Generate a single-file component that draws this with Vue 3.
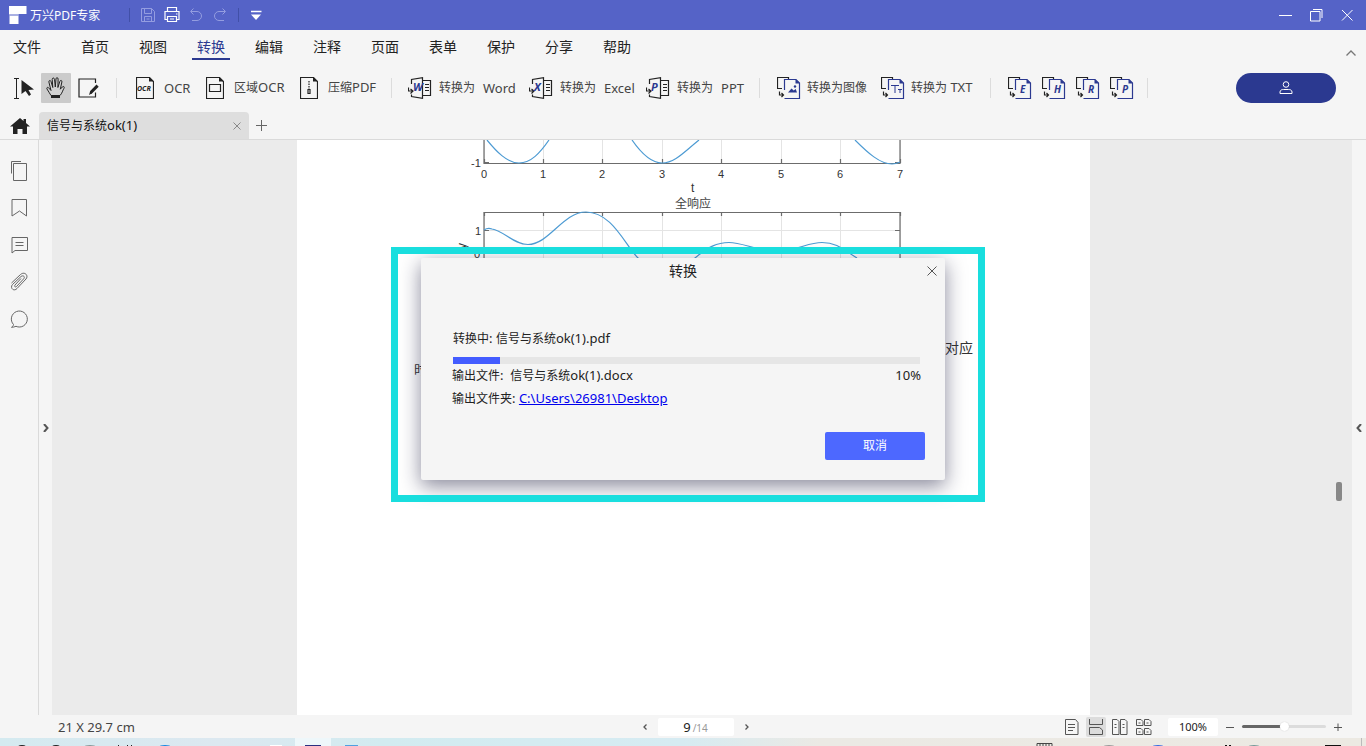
<script setup>
import { ref } from 'vue'

const menus = ['首页', '视图', '转换', '编辑', '注释', '页面', '表单', '保护', '分享', '帮助']
const activeMenu = ref('转换')
const officeTools = [
  { letter: 'W', name: 'Word' },
  { letter: 'X', name: 'Excel' },
  { letter: 'P', name: 'PPT' }
]
const moreFormats = ['E', 'H', 'R', 'P']
const ticks = [0, 1, 2, 3, 4, 5, 6, 7].map((n) => ({ n, x: 187 + Math.floor(n * 59.43) }))
const progress = ref(10)
const zoom = ref(51)
const dialogOpen = ref(true)
</script>

<template>
  <div class="app">
    <header class="titlebar">
      <svg class="logo" width="18" height="19" viewBox="0 0 18 19"><path d="M0 0h17.500v8H9.500v1.500H0zM.5 9.500h9V18h-9z" fill="#fff" /><path d="M0 9h9.500" stroke="#5563c7" /></svg>
      <span class="app-name">万兴PDF专家</span>
      <i class="tsep"></i>
      <button class="quick dim" aria-label="保存"><svg width="16" height="16" viewBox="0 0 16 16"><path d="M1.500 1.500h10l3 3v10h-13zM4.500 1.500v5h7v-5M4.500 14.500v-5h7v5M6.500 12h3" /></svg></button>
      <button class="quick" aria-label="打印"><svg width="16" height="16" viewBox="0 0 16 16"><path d="M3.500 4.500v-4h9v4M3.500 12.500h-2.500v-8h14v8h-2.500M3.500 9.500h9v5h-9zM6 12h4M12 7h1.500" stroke-width="1.200" /></svg></button>
      <button class="quick dim" aria-label="撤销"><svg width="16" height="16" viewBox="0 0 16 16"><path d="M5.500 1.500L2.500 4.500l3 3M3 4.500h6a4.500 4.500 0 0 1 0 9H4" /></svg></button>
      <button class="quick dim" aria-label="重做"><svg width="16" height="16" viewBox="0 0 16 16"><path d="M10.500 1.500l3 3-3 3M13 4.500H7a4.500 4.500 0 0 0 0 9h5" /></svg></button>
      <i class="tsep second"></i>
      <button class="quick more" aria-label="更多"><svg width="12" height="12" viewBox="0 0 12 12"><path d="M1 2.500h10.500" stroke-width="1.500" /><path d="M1 5.500h10L6 11z" fill="#fff" stroke="none" /></svg></button>
      <div class="window-controls">
        <button aria-label="最小化"><svg width="13" height="13" viewBox="0 0 13 13"><path d="M0 6.500h13" /></svg></button>
        <button aria-label="还原"><svg width="13" height="13" viewBox="0 0 13 13"><path d="M.5 2.500h9.500v9.500H.5zM3 .5h9V9" /></svg></button>
        <button aria-label="关闭"><svg width="13" height="13" viewBox="0 0 13 13"><path d="M1 1l10.500 10.500M11.500 1L1 11.500" /></svg></button>
      </div>
    </header>

    <nav class="menubar">
      <button class="menu file">文件</button>
      <button v-for="m in menus" :key="m" class="menu" :class="{ active: m === activeMenu }" @click="activeMenu = m">{{ m }}</button>
      <button class="collapse" aria-label="收起"><svg width="10" height="6" viewBox="0 0 10 6"><path d="M.5 5.500L5 1l4.500 4.500" fill="none" stroke="#777" stroke-width="1.300" /></svg></button>
    </nav>

    <div class="toolbar">
      <div class="modes">
        <button aria-label="选择"><svg width="20" height="24" viewBox="0 0 20 24"><path d="M0 2.500h5M0 22.500h5M2.500 2.500v20" stroke="#222" fill="none" /><path d="M7.500 4v14l4-3 3.500 5 2-1.500-2.500-4.500 5.500-.5z" fill="#222" /></svg></button>
        <button class="on" aria-label="手形"><svg width="22" height="24" viewBox="0 0 22 24"><path d="M6 19.500c-1-2.500-3-4-4-6.500-.8-1.400.9-2.300 1.800-1l2.200 2.500L3.900 6C3.600 4.200 5.600 4 6 5.500l1.800 6-.6-8c0-2 2-2 2.300-.2l.8 7.700.7-8.200c.2-1.700 2.200-1.500 2.100.3l-.2 8.400 2-6.200c.6-1.600 2.300-1 2 .6l-1.600 7.300 2-2.200c1.200-1.200 2.500-.2 1.700 1.200-1.200 2-2 5.300-4 7.300z" fill="#d2d2d2" stroke="#222" /><path d="M6 19.500h9v2.500H6z" fill="#222" /></svg></button>
        <button aria-label="编辑"><svg width="21" height="20" viewBox="0 0 21 20"><path d="M17.500 5V1H1v18h16.500v-4.500" stroke="#222" stroke-width="1.200" fill="none" /><path d="M11 17l1.200-4L18.500 6.500l2.200 2.200-6.500 6.500z" fill="#222" /></svg></button>
      </div>
      <i class="sep"></i>
      <div class="group ocr-group">
        <button class="tool"><svg width="18" height="22" viewBox="0 0 18 22"><path d="M.5.500h13l4 4v17H.5z" class="ink" /><path d="M13 0v4.500h5z" fill="#222" /><text x="1" y="14" class="ocr-mark">OCR</text></svg><span>OCR</span></button>
        <button class="tool"><svg width="18" height="22" viewBox="0 0 18 22"><path d="M.5.500h13l4 4v17H.5z" class="ink" /><path d="M13 0v4.500h5z" fill="#222" /><path d="M3.500 7.500h11v7h-11z" class="ink" /></svg><span><span class="cn">区域</span>OCR</span></button>
        <button class="tool"><svg width="18" height="22" viewBox="0 0 18 22"><path d="M.5.500h13l4 4v17H.5z" class="ink" /><path d="M13 0v4.500h5z" fill="#222" /><path d="M9 4v8" class="ink" stroke-dasharray="1.500 1" /><path d="M8 12.500h2v4H8z" class="ink" /></svg><span><span class="cn">压缩</span>PDF</span></button>
      </div>
      <i class="sep"></i>
      <div class="group office-group">
        <button v-for="t in officeTools" :key="t.name" class="tool office">
          <svg width="24" height="22" viewBox="0 0 24 22">
            <path d="M3.500 7V2.500L14.500.700v20.600L3.500 19.500v-2M14.500 3.500h8v15h-8M17 7.500h4M17 10.500h4M17 13.500h4M.500 10.500v3.500h4M2.500 12l2.500 2-2.500 2.500" class="ink" />
            <text x="5" y="14" class="letter">{{ t.letter }}</text>
          </svg>
          <span class="cn">转换为</span><span class="kind">{{ t.name }}</span>
        </button>
      </div>
      <i class="sep"></i>
      <div class="group media-group">
        <button class="tool media">
          <svg width="24" height="22" viewBox="0 0 24 22"><path d="M5 11.500H.500V.500h11v2M2.500 14.500v3.500h4M4.500 16l2 2L4.500 20" class="ink" /><path d="M7.500 13V2.500H19l3.500 3.500v15.500h-15" class="blue" /><path d="M18.500 2v4.500H23z" fill="#2b3990" /><path d="M11 15.500l3.500-4 2.200 2 2-1.500 1.300 3.500z" fill="#2b3990" /><circle cx="18" cy="9.500" r="1.200" fill="#2b3990" /></svg>
          <span class="cn">转换为图像</span>
        </button>
        <button class="tool media">
          <svg width="24" height="22" viewBox="0 0 24 22"><path d="M5 11.500H.500V.500h11v2M2.500 14.500v3.500h4M4.500 16l2 2L4.500 20" class="ink" /><path d="M7.500 13V2.500H19l3.500 3.500v15.500h-15" class="blue" /><path d="M10 8.500h8M14 8.500v7.500M17 12.500h4M19 12.500v3.500" fill="none" stroke="#2b3990" /><path d="M18.500 2v4.500H23z" fill="#2b3990" /></svg>
          <span><span class="cn">转换为</span> TXT</span>
        </button>
      </div>
      <i class="sep"></i>
      <div class="group more-group">
        <button v-for="f in moreFormats" :key="f" class="tool" :aria-label="f">
          <svg width="24" height="22" viewBox="0 0 24 22"><path d="M5 11.500H.500V.500h11v2M2.500 14.500v3.500h4M4.500 16l2 2L4.500 20" class="ink" /><path d="M7.500 13V2.500H19l3.500 3.500v15.500h-15" class="blue" /><path d="M18.500 2v4.500H23z" fill="#2b3990" /><text x="12" y="16" class="letter small">{{ f }}</text></svg>
        </button>
      </div>
      <i class="sep"></i>
      <button class="account" aria-label="账户"><svg width="14" height="14" viewBox="0 0 14 14"><circle cx="7" cy="3.500" r="2.800" /><path d="M1 12.500V11c0-2 2-2.500 3.500-2.500h5c1.500 0 3.500.5 3.500 2.500v1.500z" /></svg></button>
    </div>

    <div class="tabs">
      <button class="home" aria-label="主页"><svg width="20" height="16" viewBox="0 0 20 16"><path d="M10 0l3.500 3V1H16v4l4 3.500h-3V16h-4.500v-5h-5v5H3V8.500H0z" fill="#222" /></svg></button>
      <div class="tab"><span><span class="cn">信号与系统</span>ok(1)</span><button aria-label="关闭标签"><svg width="8" height="8" viewBox="0 0 8 8"><path d="M.5.500l7 7M7.500.500l-7 7" stroke="#888" /></svg></button></div>
      <button class="add" aria-label="新标签"><svg width="11" height="11" viewBox="0 0 11 11"><path d="M5.500 0v11M0 5.500h11" stroke="#666" /></svg></button>
    </div>

    <main class="workspace">
      <aside class="sidebar">
        <button aria-label="页面"><svg width="18" height="20" viewBox="0 0 18 20"><path d="M3.500 2.500h13v17h-13zM1.500 12.500V.500h9.500" /></svg></button>
        <button aria-label="书签"><svg width="18" height="20" viewBox="0 0 18 20"><path d="M2 1.500h14.500v16.500L9.500 13 2 18z" /></svg></button>
        <button aria-label="注释"><svg width="18" height="20" viewBox="0 0 18 20"><path d="M2 2.500h15.500v13H5l-3 2.500zM5.500 7.500h8M5.500 10.500h8" /></svg></button>
        <button aria-label="附件"><svg width="18" height="20" viewBox="0 0 18 20"><path d="M1.500 11L10.500 2.500c4-3.500 8.500 1 5.500 4.500l-9 9.500c-3 3.500-7.500-.5-4.500-4l8.500-8c2.500-1.800 4.500.5 2.500 2.500l-7 7.500c-1.200 1.200-2.500-.2-1.500-1.500l6-6.500" /></svg></button>
        <button aria-label="讨论"><svg width="18" height="20" viewBox="0 0 18 20"><path d="M3.500 15.500a8 8 0 1 1 2.500 1.800c-1.500.8-3 .8-4.500 1 1-.8 2-1.500 2-2.800" /></svg></button>
      </aside>
      <button class="expander" aria-label="展开左侧"><svg width="6" height="8" viewBox="0 0 6 8"><path d="M1 0l3.500 4L1 8" /></svg></button>
      <div class="canvas">
        <article class="page">
          <svg class="figure" width="793" height="260" viewBox="0 0 793 260">
            <g stroke="#e4e4e4"><path v-for="t in ticks" :key="t.n" :d="`M${t.x + .5} 0v23M${t.x + .5} 72v60`" /><path d="M187 90.500h416" /></g>
            <g class="axis">
              <path d="M187 0v23.500h416V0M187 130V72.500h416V130" />
              <path d="M187 22.500h5M603 22.500h-5M187 90.500h5M603 90.500h-5" />
              <path v-for="t in ticks" :key="t.n" :d="`M${t.x + .5} 23v-4M${t.x + .5} 72v4`" />
            </g>
            <g class="curve">
              <path d="M190 0C199 11 210 23 222 23C234 23 243 13 252 0M335 0C344 13 355 23 365 23C378 23 388 11 402 0M558 0C571 13 583 24 595 24Q599 24 603 22" />
              <path d="M187 90C190 88 192 88 195 89C207 91 217 104.500 231 104.500C252 104.500 266 72 289 72C315 72 328 105 341 118C360 137 382 137 398 118C411 107 420 102.500 432 102.500C446 102.500 460 111 479 111C500 111 510 102.500 525 102.500C540 102.500 547 110 560 118" />
            </g>
            <g class="labels">
              <text x="174" y="27">-1</text>
              <text v-for="t in ticks" :key="t.n" :x="t.x - 3" y="38">{{ t.n }}</text>
              <text x="394" y="52" class="axis-name">t</text><text x="378" y="68" class="chart-title">全响应</text>
              <text x="178" y="95">1</text><text x="177" y="118">0</text>
              <text x="0" y="0" class="axis-name" transform="translate(169 109) rotate(-90)">y</text>
            </g>
            <text x="648" y="213" class="body-text">对应</text>
            <text x="117" y="234" class="body-text small">时</text>
          </svg>
        </article>
      </div>
      <div class="scrollbar"><i></i></div>
      <button class="expander right" aria-label="展开右侧"><svg width="6" height="8" viewBox="0 0 6 8"><path d="M5 0L1.500 4 5 8" /></svg></button>
    </main>

    <footer class="status">
      <span class="size">21 X 29.7 cm</span>
      <div class="pager">
        <button aria-label="上一页"><svg width="4" height="6" viewBox="0 0 4 6"><path d="M3.500.500L1 3l2.500 2.500" /></svg></button>
        <div class="page-no"><b>9</b><span>/14</span></div>
        <button aria-label="下一页"><svg width="4" height="6" viewBox="0 0 4 6"><path d="M.500.500L3 3 .500 5.500" /></svg></button>
      </div>
      <div class="views">
        <button aria-label="单页"><svg width="16" height="16" viewBox="0 0 16 16"><path d="M1.500.500h10l2.500 3v12H1.500zM4 5.500h7M4 8.500h7M4 11.500h5" /></svg></button>
        <button class="on" aria-label="连续"><svg width="16" height="16" viewBox="0 0 16 16"><path d="M1.500 0v5.500h13V0M1.500 15.500v-7h10l3 2.500v4.500z" /></svg></button>
        <button aria-label="双页"><svg width="16" height="16" viewBox="0 0 16 16"><path d="M.500.500h4.500l2 2v13H.5zM8.500.500H13l2 2v13H8.500zM2.500 5.500h2M2.500 8.500h2M10.500 5.500h2M10.500 8.500h2" /></svg></button>
        <button aria-label="双页连续"><svg width="16" height="16" viewBox="0 0 16 16"><path d="M.500.500H5l2 2v4H.5zM8.500.500H13l2 2v4H8.500zM.500 9.500H5l2 2v4H.5zM8.500 9.500H13l2 2v4H8.500zM2.500 4h2M10.500 4h2M2.500 13h2M10.500 13h2" /></svg></button>
        <input class="zoom-value" value="100%" aria-label="缩放比例" />
        <button class="step" aria-label="缩小"><svg width="8" height="8" viewBox="0 0 8 8"><path d="M0 4.500h8" /></svg></button>
        <input v-model="zoom" class="slider" type="range" min="0" max="100" aria-label="缩放" :style="{ '--fill': zoom + '%' }" />
        <button class="step" aria-label="放大"><svg width="8" height="8" viewBox="0 0 8 8"><path d="M0 4.500h8M4 .500v8" /></svg></button>
      </div>
    </footer>
    <svg class="taskbar" height="8" width="100%">
      <rect x="295" width="36" height="8" fill="#eef7fa" />
      <rect x="305" y="7" width="16" height="1" fill="#2b3080" /><rect x="345" y="7" width="13" height="1" fill="#4fa0e0" /><rect x="270" y="7" width="12" height="1" fill="#fff" />
      <g fill="#222"><ellipse cx="22" cy="9" rx="4" ry="2" /><ellipse cx="56" cy="9" rx="4" ry="2" /><path d="M118 7h1v1h-1zM127 7h1v1h-1zM131 7h1v1h-1z" /></g>
      <ellipse cx="90" cy="9" rx="6" ry="2" fill="#899" /><ellipse cx="165" cy="9" rx="6" ry="2" fill="#1687e0" />
      <path d="M1037 8V5.500h15V8M1040 6v2M1043 6v2M1046 6v2M1049 6v2" fill="none" stroke="#444" />
      <ellipse cx="1109" cy="9" rx="6" ry="2" fill="#999" /><ellipse cx="1158" cy="9" rx="6" ry="2" fill="#356be0" /><ellipse cx="1254" cy="9" rx="6" ry="2" fill="#799" />
      <path d="M1225 7h2v1h-2zM1229 7h2v1h-2zM1325 7h16v1h-16z" fill="#111" /><path d="M1361.500 0v8" stroke="#bbb" />
    </svg>

    <section v-if="dialogOpen" class="dialog" role="dialog" aria-labelledby="dialog-title">
      <header><h2 id="dialog-title">转换</h2><button class="close" aria-label="关闭对话框" @click="dialogOpen = false"><svg width="10" height="10" viewBox="0 0 10 10"><path d="M.5.500l9 9M9.500.500l-9 9" stroke="#555" /></svg></button></header>
      <div class="dialog-body">
        <label for="convert-progress"><span class="cn">转换中</span>: <span class="cn">信号与系统</span>ok(1).pdf</label>
        <progress id="convert-progress" :value="progress" max="100"></progress>
        <p><span><span class="cn">输出文件</span>:&nbsp; <span class="cn">信号与系统</span>ok(1).docx</span><span>{{ progress }}%</span></p>
        <p><span><span class="cn">输出文件夹</span>: <a href="#">C:\Users\26981\Desktop</a></span></p>
      </div>
      <button class="cancel">取消</button>
    </section>
    <div class="highlight"></div>
  </div>
</template>

<style>
html, body, #app { height: 100%; }
body { margin: 0; overflow: hidden; }
</style>

<style scoped>
* { box-sizing: border-box; }
.app { position: relative; display: flex; flex-direction: column; height: 100vh; background: #f5f5f5; color: #222; font: 13px/18px "Noto Sans", "Noto Sans CJK SC", sans-serif; white-space: nowrap; }
button { border: 0; padding: 0; background: none; font: inherit; color: inherit; display: flex; align-items: center; justify-content: center; flex: none; }
svg { display: block; flex: none; }
.cn { font-size: 12px; }

.titlebar { height: 30px; display: flex; align-items: center; background: #5563c7; color: #fff; padding: 0 3px 0 9px; flex: none; }
.app-name { font-size: 12px; line-height: 20px; padding-top: 1px; margin-left: 3px; width: 99px; }
.tsep { width: 1px; height: 14px; background: #4150a8; margin-right: 6px; }
.tsep.second { margin: 0 5px 0 6px; }
.quick { width: 24px; height: 24px; }
.quick svg, .window-controls svg { fill: none; stroke: #fff; }
.quick.dim svg { stroke: #949de0; }
.window-controls { margin-left: auto; display: flex; }
.window-controls button { width: 31px; height: 30px; }

.menubar { height: 35px; display: flex; align-items: flex-start; gap: 20px; padding: 4px 10px 0 8px; font-size: 14px; flex: none; }
.menu { width: 38px; height: 26px; padding-top: 2px; border-bottom: 2px solid transparent; }
.menu.file { margin-right: 10px; }
.menu.active { color: #2b3990; border-color: #2b3990; }
.collapse { margin: 16px 0 0 auto; }

.toolbar { height: 45px; display: flex; align-items: center; flex: none; padding: 0 30px 0 9px; color: #444; }
.modes { display: flex; gap: 2px; margin-right: 13px; }
.modes button { width: 30px; height: 30px; }
.modes .on { background: #cbcbcb; border-radius: 1px; }
.sep { width: 1px; height: 20px; background: #dcdcdc; }
.group { display: grid; }
.ocr-group { grid-template-columns: 70px 94px 91px; margin-left: 19px; }
.office-group { grid-template-columns: 121px 117px 113px; margin-left: 16px; }
.media-group { grid-template-columns: 104px 109px; margin-left: 17px; }
.more-group { grid-template-columns: repeat(4, 34px); margin: 0 3px 0 17px; }
.tool { justify-content: flex-start; gap: 10px; height: 30px; }
.tool.office { gap: 7px; }
.tool.media { gap: 6px; }
.ink { fill: none; stroke: #222; stroke-width: 1.200; }
.blue { fill: none; stroke: #2b3990; stroke-width: 1.200; }
.letter { font: italic 700 11px "Noto Sans", sans-serif; fill: #2b3990; }
.letter.small { font-size: 10px; }
.ocr-mark { font: italic 700 7px "Noto Sans", sans-serif; fill: #222; }
.kind { margin-left: 1px; }
.account { width: 100px; height: 30px; border-radius: 15px; background: #2b3990; margin-left: auto; }
.account svg { fill: none; stroke: #fff; }

.tabs { height: 30px; display: flex; align-items: flex-end; border-bottom: 1px solid #dadada; flex: none; }
.home { width: 39px; height: 27px; }
.tab { width: 210px; height: 27px; background: #dedede; border-radius: 4px 4px 0 0; display: flex; align-items: center; justify-content: space-between; padding: 0 8px; color: #111; }
.add { width: 25px; height: 27px; }

.workspace { flex: 1; min-height: 0; display: flex; }
.sidebar { width: 39px; border-right: 1px solid #dadada; display: flex; flex-direction: column; align-items: center; gap: 17px; padding-top: 21px; flex: none; }
.sidebar svg { fill: none; stroke: #666; }
.expander { width: 13px; }
.expander.right { width: 14px; }
.expander svg { fill: none; stroke: #555; stroke-width: 2; }
.canvas { flex: 1; min-width: 0; background: #ebebeb; display: flex; justify-content: center; overflow: hidden; }
.page { width: 793px; background: #fff; flex: none; }
.axis { fill: none; stroke: #6c6c6c; stroke-width: 1.200; }
.curve { fill: none; stroke: #4d9bd3; stroke-width: 1.200; }
.labels { font: 11px "Liberation Sans", "Noto Sans CJK SC", sans-serif; fill: #333; }
.axis-name { font-size: 12px; }
.chart-title { font: 12px "Liberation Serif", "Noto Sans CJK SC", serif; fill: #444; }
.body-text { font: 14px "Noto Sans CJK SC", sans-serif; fill: #333; }
.body-text.small { font-size: 13px; }
.scrollbar { width: 17px; background: #ebebeb; padding: 342px 0 0 1px; flex: none; }
.scrollbar i { display: block; width: 6px; height: 19px; border-radius: 2px; background: #888; }

.status { height: 23px; display: grid; grid-template-columns: 1fr auto 1fr; align-items: center; padding: 0 14px 0 39px; color: #444; flex: none; }
.size { padding-left: 19px; }
.pager { display: flex; align-items: center; gap: 4px; }
.pager button { width: 18px; height: 18px; }
.pager svg { fill: none; stroke: #555; stroke-width: 1.300; }
.page-no { width: 76px; height: 18px; border-radius: 2px; background: #fff; display: flex; align-items: baseline; justify-content: center; gap: 2px; }
.page-no b { font-weight: 400; color: #222; }
.page-no span { font-size: 10px; color: #999; }
.views { justify-self: end; display: flex; align-items: center; gap: 4px; margin-right: 6px; }
.views button { width: 20px; height: 20px; }
.views button.on { background: #dcdcdc; border-radius: 2px; }
.views svg { fill: none; stroke: #555; }
.zoom-value { width: 50px; height: 18px; border: 0; border-radius: 2px; background: #fff; text-align: center; font: 11px "Noto Sans", sans-serif; padding: 0; margin-left: 10px; color: #222; }
.views .step { width: 16px; }
.slider { appearance: none; width: 84px; height: 12px; margin: 0; background: none; }
.slider::-webkit-slider-runnable-track { height: 3px; border-radius: 2px; background: linear-gradient(to right, #666 var(--fill), #dcdcdc var(--fill)); }
.slider::-webkit-slider-thumb { appearance: none; width: 9px; height: 9px; margin-top: -3px; border-radius: 50%; background: #fff; box-shadow: 0 0 1px #bbb; }
.taskbar { background: linear-gradient(90deg, #d4eaf0, #dce8f0 16%, #d2ebf0 28%, #d6ebf2 50%, #ebe9e4 60%, #ece9e2); }

.dialog { position: absolute; left: calc(50% - 262px); top: 258px; width: 524px; background: #f5f5f5; border-radius: 2px; box-shadow: 0 6px 20px rgba(20, 20, 55, .5); padding-bottom: 20px; }
.dialog header { height: 26px; display: flex; align-items: center; justify-content: center; position: relative; }
h2 { margin: 0; font-size: 14px; font-weight: 400; }
.close { position: absolute; right: 3px; top: 3px; width: 20px; height: 20px; }
.dialog-body { padding: 44px 25px 0 32px; }
.dialog-body label { display: block; height: 29px; line-height: 20px; }
progress { appearance: none; display: block; width: 100%; height: 7px; border: 0; background: #e6e6e6; }
progress::-webkit-progress-bar { background: #e6e6e6; }
progress::-webkit-progress-value { background: #435cff; }
.dialog-body p { margin: 0 -1px; height: 23px; line-height: 23px; display: flex; justify-content: space-between; }
.dialog-body a { color: #00e; }
.cancel { width: 100px; height: 28px; margin: 22px 20px 0 auto; border-radius: 2px; background: #4d68ff; color: #fff; font-size: 12px; }
.highlight { position: absolute; left: calc(50% - 292px); top: 247px; width: 594px; height: 255px; border: 7px solid #19dede; pointer-events: none; }
</style>
